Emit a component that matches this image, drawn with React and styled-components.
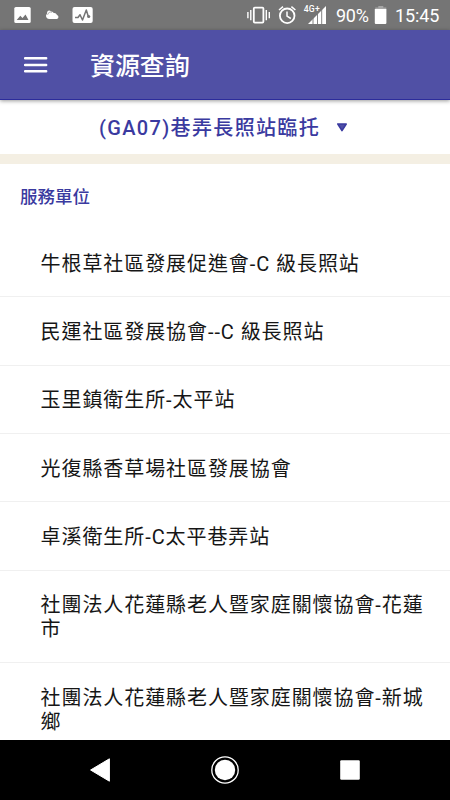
import React, { useState } from 'react';
import { createGlobalStyle, styled } from 'styled-components';

const GlobalStyle = createGlobalStyle`
    * {
        box-sizing: border-box;
    }

    body {
        margin: 0;
        font-family: Roboto, 'Noto Sans CJK TC', sans-serif;
        background: #fff;
    }
`;

const Screen = styled.div`
    display: flex;
    flex-direction: column;
    width: 450px;
    height: 800px;
    overflow: hidden;
    background-color: #fff;
`;

const StatusBar = styled.div`
    flex: none;
    display: flex;
    justify-content: space-between;
    height: 30px;
    background-color: #757575;
    color: #fff;
`;

const StatusIcons = styled.svg`
    display: block;
    width: ${(props) => props.$width}px;
    height: 30px;
`;

const StatusRight = styled.div`
    display: flex;
    padding-right: 10px;
    font-size: 18px;
    line-height: 31px;
`;

const Percent = styled.span`
    width: 37px;
    letter-spacing: -0.3px;
    white-space: nowrap;
`;

const Clock = styled.span`
    width: 45px;
    letter-spacing: -0.1px;
    white-space: nowrap;
`;

const Header = styled.header`
    position: relative;
    flex: none;
    display: flex;
    align-items: center;
    height: 70px;
    padding-left: 24px;
    gap: 42px;
    background-color: #5050a5;
    border-bottom: 1px solid #2c2c9b;
    box-shadow: 0 1px 4px rgba(0, 0, 0, 0.4);
`;

const MenuButton = styled.button`
    display: flex;
    padding: 0;
    border: 0;
    background: none;
`;

const Title = styled.h1`
    margin: 0;
    padding-top: 4px;
    font-size: 25px;
    line-height: 36px;
    font-weight: 500;
    letter-spacing: -0.1px;
    color: #fff;
`;

const ServiceSelect = styled.button`
    flex: none;
    display: flex;
    justify-content: center;
    align-items: center;
    gap: 16px;
    height: 54px;
    padding: 0 3px 1px 0;
    border: 0;
    background-color: #fff;
    color: #3a3aa0;
    font-family: inherit;
    font-size: 20px;
    font-weight: 500;
    letter-spacing: 1.35px;
`;

const Band = styled.div`
    flex: none;
    height: 10px;
    background-color: #f4efe3;
`;

const Content = styled.main`
    flex: 1;
    min-height: 0;
    overflow: hidden;
`;

const SectionTitle = styled.h2`
    margin: 0;
    padding: 20px 20px 0;
    height: 65px;
    font-size: 17.5px;
    line-height: 26px;
    font-weight: 500;
    color: #3a3aa0;
`;

const List = styled.ul`
    margin: 0;
    padding: 0;
    list-style: none;
`;

const Item = styled.li`
    padding: 22.6px 20px 20.75px 40.6px;
    border-bottom: 1px solid #f0f0f0;
    font-size: 20px;
    line-height: 24px;
    letter-spacing: 0.92px;
    color: #161616;
    word-break: break-all;
`;

const NavBar = styled.nav`
    flex: none;
    display: flex;
    justify-content: space-between;
    align-items: center;
    height: 60px;
    padding: 0 85px;
    background-color: #000;
`;

const NavButton = styled.button`
    display: flex;
    padding: 0;
    border: 0;
    background: none;
`;

const units = [
    '牛根草社區發展促進會-C 級長照站',
    '民運社區發展協會--C 級長照站',
    '玉里鎮衛生所-太平站',
    '光復縣香草場社區發展協會',
    '卓溪衛生所-C太平巷弄站',
    '社團法人花蓮縣老人暨家庭關懷協會-花蓮市',
    '社團法人花蓮縣老人暨家庭關懷協會-新城鄉',
];

// 左邊通知圖示
const NotificationIcons = () => (
    <StatusIcons $width={100} viewBox='0 0 100 30'>
        <rect x='14.3' y='7' width='16.4' height='16' rx='1.6' fill='#fff' />
        <path d='M16.7 20l3.6-4.2 2.2 2.3 3-3.6 3 5.5z' fill='#757575' />
        <path
            d='M49 19a3 3 0 0 1-2.4-4.8 4 4 0 0 1 7.2-1.2 3 3 0 0 1 3.2 2A2.1 2.1 0 0 1 57 19z'
            fill='#fff'
        />
        <circle cx='49.2' cy='12.6' r='2' fill='#fff' />
        <path
            d='M47.6 14.8a3.4 3.4 0 0 1 4.5-2.6'
            fill='none'
            stroke='#757575'
            strokeWidth='.6'
        />
        <rect x='72.5' y='7' width='20.2' height='16' rx='2' fill='#fff' />
        <path
            d='M75 17.5h3l2-2.8 2.5 5.3 3.8-10 2 6.5'
            fill='none'
            stroke='#757575'
            strokeWidth='1.5'
            strokeLinejoin='round'
        />
        <circle cx='88.7' cy='16.5' r='1.6' fill='#757575' />
    </StatusIcons>
);

// 震動、鬧鐘、訊號
const SystemIcons = () => (
    <StatusIcons $width={90} viewBox='246 0 90 30'>
        <rect
            x='253.8'
            y='7.6'
            width='9.6'
            height='15'
            rx='1'
            fill='none'
            stroke='#fff'
            strokeWidth='1.8'
        />
        <path
            d='M250.8 10v10.2M247.9 12v6.2M266.3 10v10.2M269.3 12v6.2'
            stroke='#fff'
            strokeWidth='1.4'
        />
        <circle
            cx='287.2'
            cy='15.8'
            r='7.3'
            fill='none'
            stroke='#fff'
            strokeWidth='1.8'
        />
        <path
            d='M287 11.5v4.7l3.8 2.3M279 10l4-3.4M295.4 10l-4-3.4'
            fill='none'
            stroke='#fff'
            strokeWidth='1.5'
        />
        <text
            x='303.7'
            y='11.6'
            fill='#fff'
            fontSize='8.6'
            fontWeight='500'
            textLength='16'
        >
            4G+
        </text>
        <path d='M308 24L326 6v18z' fill='#fff' />
        <path
            d='M313 18v6M317.5 14v10M321.7 9v15'
            stroke='#757575'
            strokeWidth='.9'
        />
    </StatusIcons>
);

const BatteryIcon = () => (
    <StatusIcons $width={22} viewBox='373 0 22 30'>
        <path d='M378.3 6h5v1.5h3V9h-11V7.5h3z' fill='#a6a6a6' />
        <path d='M374.8 9h11.6v14a1 1 0 0 1-1 1h-9.6a1 1 0 0 1-1-1z' fill='#fff' />
    </StatusIcons>
);

const App = () => {
    const [service] = useState('(GA07)巷弄長照站臨托');

    return (
        <>
            <GlobalStyle />
            <Screen>
                <StatusBar>
                    <NotificationIcons />
                    <StatusRight>
                        <SystemIcons />
                        <Percent>90%</Percent>
                        <BatteryIcon />
                        <Clock>15:45</Clock>
                    </StatusRight>
                </StatusBar>
                <Header>
                    <MenuButton aria-label='選單'>
                        <svg width='24' height='18' viewBox='0 0 24 18'>
                            <path
                                d='M1 2.2h21.2M1 9h21.2M1 15.3h21.2'
                                stroke='#fff'
                                strokeWidth='2.4'
                                strokeLinecap='round'
                            />
                        </svg>
                    </MenuButton>
                    <Title>資源查詢</Title>
                </Header>
                <ServiceSelect>
                    {service}
                    <svg width='12' height='10' viewBox='0 0 12 10'>
                        <path
                            d='M1.8 2h8.4L6 8.6z'
                            fill='#5050a5'
                            stroke='#3a3aa0'
                            strokeWidth='1.6'
                            strokeLinejoin='round'
                        />
                    </svg>
                </ServiceSelect>
                <Band />
                <Content>
                    <SectionTitle>服務單位</SectionTitle>
                    <List>
                        {units.map((unit) => (
                            <Item key={unit}>{unit}</Item>
                        ))}
                    </List>
                </Content>
                <NavBar>
                    <NavButton aria-label='返回'>
                        <svg width='30' height='30' viewBox='0 0 30 30'>
                            <path
                                d='M5.6 15L24.4 3.8v22.4z'
                                fill='#fff'
                                stroke='#fff'
                                strokeLinejoin='round'
                            />
                        </svg>
                    </NavButton>
                    <NavButton aria-label='主畫面'>
                        <svg width='30' height='30' viewBox='0 0 30 30'>
                            <circle
                                cx='15'
                                cy='15'
                                r='13.2'
                                fill='none'
                                stroke='#fff'
                                strokeWidth='1.3'
                            />
                            <circle cx='15' cy='15' r='10.2' fill='#fff' />
                        </svg>
                    </NavButton>
                    <NavButton aria-label='最近使用'>
                        <svg width='30' height='30' viewBox='0 0 30 30'>
                            <rect
                                x='5.2'
                                y='5.2'
                                width='19.6'
                                height='19.6'
                                rx='1.2'
                                fill='#fff'
                            />
                        </svg>
                    </NavButton>
                </NavBar>
            </Screen>
        </>
    );
};

export default App;
